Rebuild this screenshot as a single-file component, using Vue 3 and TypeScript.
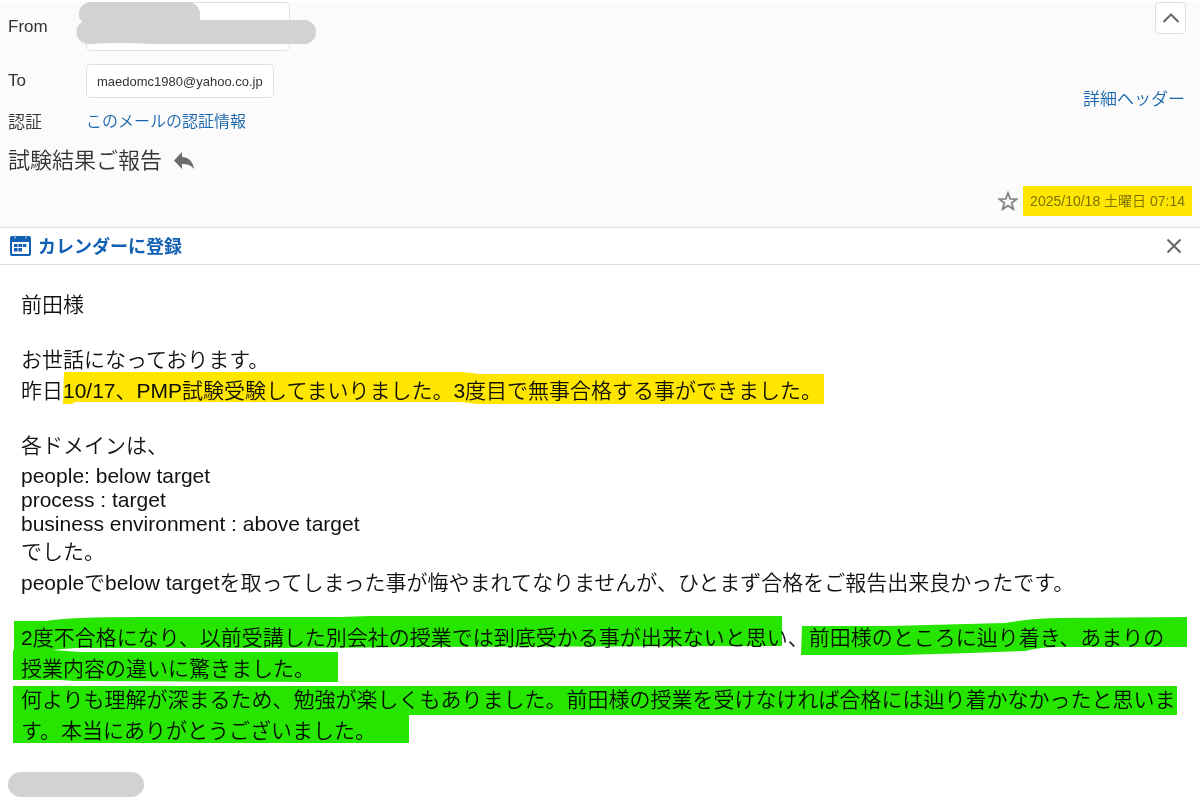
<script setup lang="ts">
import { ref } from 'vue'

type Line = { text: string; kind: 'jp' | 'latin' | 'blank' }

const sender = ref('')
const recipient = 'maedomc1980@yahoo.co.jp'
const lines: Line[] = [
  { text: '前田様', kind: 'jp' },
  { text: '', kind: 'blank' },
  { text: 'お世話になっております。', kind: 'jp' },
  { text: '昨日10/17、PMP試験受験してまいりました。3度目で無事合格する事ができました。', kind: 'jp' },
  { text: '', kind: 'blank' },
  { text: '各ドメインは、', kind: 'jp' },
  { text: 'people: below target', kind: 'latin' },
  { text: 'process : target', kind: 'latin' },
  { text: 'business environment : above target', kind: 'latin' },
  { text: 'でした。', kind: 'jp' },
  { text: 'peopleでbelow targetを取ってしまった事が悔やまれてなりませんが、ひとまず合格をご報告出来良かったです。', kind: 'jp' },
  { text: '', kind: 'blank' },
  { text: '2度不合格になり、以前受講した別会社の授業では到底受かる事が出来ないと思い、前田様のところに辿り着き、あまりの', kind: 'jp' },
  { text: '授業内容の違いに驚きました。', kind: 'jp' },
  { text: '何よりも理解が深まるため、勉強が楽しくもありました。前田様の授業を受けなければ合格には辿り着かなかったと思いま', kind: 'jp' },
  { text: 'す。本当にありがとうございました。', kind: 'jp' },
]
</script>

<template>
  <main class="mail">
    <header class="head">
      <button class="collapse" type="button" aria-label="ヘッダーを閉じる">
        <svg width="18" height="12" viewBox="0 0 18 12"><path d="M1.500 10 9 2.500l7.500 7.500" fill="none" stroke="#666" stroke-width="2" /></svg>
      </button>
      <div class="row row-from">
        <span class="label">From</span>
        <div class="from">
          <button class="chip chip-from" type="button" aria-label="差出人">{{ sender }}</button>
          <svg class="mask" width="242" height="46" viewBox="0 0 242 46" aria-hidden="true">
            <path d="M15 0H111a12 12 0 0 1 12 12V18H227a12 12 0 0 1 0 24H75Q40 40 13 42A12 12 0 0 1 5 20A12 12 0 0 1 15 0Z" fill="#d0d2d4" />
          </svg>
        </div>
      </div>
      <div class="row row-to">
        <span class="label">To</span>
        <button class="chip" type="button">{{ recipient }}</button>
        <a class="detail" href="#header">詳細ヘッダー</a>
      </div>
      <div class="row row-auth">
        <span class="label">認証</span>
        <a class="auth" href="#auth">このメールの認証情報</a>
      </div>
      <div class="subject">
        <h1>試験結果ご報告</h1>
        <button class="icon" type="button" aria-label="返信">
          <svg width="20" height="18" viewBox="0 0 20 18"><path d="M8 0v5c7 0 11 5 12 12-3-4-7-5-12-5v5L0 8.500Z" fill="#6b6b6b" /></svg>
        </button>
      </div>
      <div class="meta">
        <button class="icon" type="button" aria-label="スター">
          <svg width="20" height="20" viewBox="0 0 20 20"><path d="m10 2 2.200 5.900 6.300.3-4.900 3.900 1.700 6.100L10 14.700l-5.300 3.500 1.700-6.100L1.500 8.200l6.300-.3Z" fill="none" stroke="#858585" stroke-width="1.800" /></svg>
        </button>
        <time datetime="2025-10-18T07:14">2025/10/18 土曜日 07:14</time>
      </div>
    </header>

    <div class="calendar">
      <button class="register" type="button">
        <svg width="21" height="21" viewBox="0 0 21 21">
          <rect x="1" y="2" width="19" height="18" rx="1" fill="#fff" stroke="#1160b3" stroke-width="2" />
          <path d="M1 2H20V7H1Z" fill="#1160b3" />
          <path d="M5 0v3.500M16 0v3.500" stroke="#a9c8e8" stroke-width="1.200" />
          <path d="M4 9h3.600v3H4zM8.400 9H12v3H8.400zM12.800 9h3.600v3h-3.600zM4 13h3.600v3.500H4zM8.400 13H12v3.500H8.400z" fill="#1160b3" />
        </svg>
        <span>カレンダーに登録</span>
      </button>
      <button class="icon" type="button" aria-label="閉じる">
        <svg width="16" height="16" viewBox="0 0 16 16"><path d="m1.500 1.500 13 13m0-13-13 13" stroke="#666" stroke-width="2" /></svg>
      </button>
    </div>

    <article class="body">
      <p v-for="(line, i) in lines" :key="i" :class="line.kind">{{ line.text }}</p>
      <svg class="marker" aria-hidden="true">
        <g fill="#ffe600">
          <path d="M64 107H462L480 109H824V139H478L460 137H75L72 139H63Z" />
        </g>
        <g fill="#26e600">
          <path d="M14 356H46Q70 352 140 352H340L370 351H782V381L400 382Q340 383 150 383H75L52 385L80 387H338V417H328L75 416L60 415H13V385H14Z" />
          <path d="M802 361H890L1005 358Q1035 353 1060 353L1187 352V382H1060Q1040 382 1025 386L970 388L902 390H801Z" />
          <path d="M13 421H1177V450H409V478H13Z" />
        </g>
      </svg>
    </article>
    <div class="signature" aria-hidden="true"></div>
  </main>
</template>

<style>
body {
  margin: 0;
  background: #fff;
}
</style>

<style scoped>
.mail {
  font-family: "Liberation Sans", "Noto Sans CJK JP", sans-serif;
  font-weight: 350;
  color: #333;
}
button {
  font: inherit;
  color: inherit;
  cursor: pointer;
}
a {
  color: #1664ad;
  text-decoration: none;
}
svg {
  display: block;
}
.head {
  position: relative;
  padding: 0 8px 11px;
  border-top: 2px solid #fff;
  border-bottom: 1px solid #dedede;
  background: #fbfbfb;
}
.collapse {
  position: absolute;
  top: 0;
  right: 14px;
  display: flex;
  align-items: center;
  justify-content: center;
  width: 31px;
  height: 32px;
  padding: 0;
  border: 1px solid #dedede;
  border-radius: 4px;
  background: #fff;
}
.row {
  display: flex;
  align-items: center;
  font-size: 17px;
}
.label {
  width: 78px;
  flex: none;
}
.row-from {
  height: 49px;
}
.from {
  position: relative;
}
.chip {
  box-sizing: border-box;
  height: 34px;
  padding: 0 10px;
  border: 1px solid #dedede;
  border-radius: 5px;
  background: #fff;
  font-size: 13px;
}
.chip-from {
  display: block;
  width: 204px;
  height: 49px;
}
.mask {
  position: absolute;
  top: 0;
  left: -9px;
  overflow: visible;
}
.row-to {
  height: 34px;
  padding-top: 13px;
}
.detail {
  margin: 32px 7px 0 auto;
}
.row-auth {
  height: 44px;
}
.auth {
  font-size: 16px;
}
.subject {
  display: flex;
  align-items: center;
  gap: 12px;
  height: 38px;
}
h1 {
  margin: 0;
  font-size: 22px;
  font-weight: inherit;
  line-height: 34px;
}
.icon {
  padding: 0;
  border: 0;
  background: none;
}
.meta {
  display: flex;
  align-items: center;
  justify-content: flex-end;
  gap: 5px;
  margin-top: 6px;
}
time {
  padding: 0 7px;
  background: #ffe600;
  color: #7b7000;
  font-size: 14px;
  line-height: 30px;
}
.calendar {
  display: flex;
  align-items: center;
  justify-content: space-between;
  height: 36px;
  padding: 0 18px 0 10px;
  border-bottom: 1px solid #dedede;
}
.register {
  display: flex;
  align-items: center;
  gap: 7px;
  padding: 0 0 2px;
  border: 0;
  background: none;
  color: #1160b3;
  font-size: 18px;
  font-weight: 700;
}
.body {
  position: relative;
  padding: 24px 0 0 21px;
  color: #111;
  font-size: 21px;
}
.body p {
  margin: 0;
  white-space: nowrap;
}
.body .jp {
  line-height: 31px;
}
.body .latin {
  line-height: 24px;
}
.body .jp + .latin {
  margin-top: 3px;
}
.body .blank {
  height: 24px;
}
.marker {
  position: absolute;
  top: 0;
  left: 0;
  width: 100%;
  height: 100%;
  mix-blend-mode: multiply;
  pointer-events: none;
}
.signature {
  width: 136px;
  height: 25px;
  margin: 26px 0 0 8px;
  border-radius: 13px;
  background: #d0d2d4;
}
</style>
